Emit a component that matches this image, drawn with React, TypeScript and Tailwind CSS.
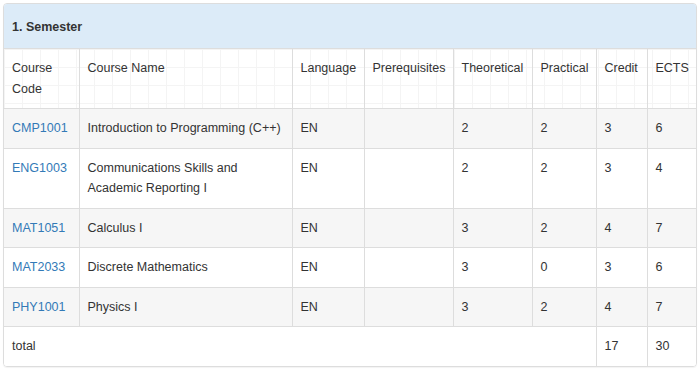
type Course = {
  code: string;
  name: string;
  lang: string;
  prereq: string;
  theory: number;
  practice: number;
  credit: number;
  ects: number;
};

const courses: Course[] = [
  { code: "CMP1001", name: "Introduction to Programming (C++)", lang: "EN", prereq: "", theory: 2, practice: 2, credit: 3, ects: 6 },
  { code: "ENG1003", name: "Communications Skills and Academic Reporting I", lang: "EN", prereq: "", theory: 2, practice: 2, credit: 3, ects: 4 },
  { code: "MAT1051", name: "Calculus I", lang: "EN", prereq: "", theory: 3, practice: 2, credit: 4, ects: 7 },
  { code: "MAT2033", name: "Discrete Mathematics", lang: "EN", prereq: "", theory: 3, practice: 0, credit: 3, ects: 6 },
  { code: "PHY1001", name: "Physics I", lang: "EN", prereq: "", theory: 3, practice: 2, credit: 4, ects: 7 },
];

const headers = ["Course Code", "Course Name", "Language", "Prerequisites", "Theoretical", "Practical", "Credit", "ECTS"];
const widths = ["w-[75px]", "w-[213px]", "w-[72px]", "w-[89px]", "w-[79px]", "w-[64px]", "w-[51px]", "w-[49px]"];

const cell = "border border-[#dddddd] px-[8px] py-[9px] align-top text-left font-normal first:border-l-0 last:border-r-0";

const App = () => {
  const totalCredit = courses.reduce((s, c) => s + c.credit, 0);
  const totalEcts = courses.reduce((s, c) => s + c.ects, 0);

  return (
    <div className="w-[700px] h-[369px] bg-white p-[3px] font-['Liberation_Sans',Arial,sans-serif] text-[12.5px] leading-[20.5px] text-[#333333]">
      <div className="border border-[#dddddd] rounded-[4px] overflow-hidden shadow-[0_1px_1px_rgba(0,0,0,0.05)]">
        {/* 학기 제목 */}
        <div className="bg-[#dcebf8] border-b border-[#dddddd] px-[8px] pt-[13px] pb-[10.5px] font-bold">
          1. Semester
        </div>

        <table className="w-full table-fixed border-collapse">
          <colgroup>
            {widths.map((w, i) => (
              <col key={i} className={w} />
            ))}
          </colgroup>
          <thead>
            <tr className="bg-white bg-[linear-gradient(to_right,#f4f4f4_1px,transparent_1px),linear-gradient(to_bottom,#f4f4f4_1px,transparent_1px)] bg-[size:18px_18px]">
              {headers.map((h) => (
                <th key={h} className={`${cell} border-t-0`}>
                  {h}
                </th>
              ))}
            </tr>
          </thead>
          <tbody>
            {courses.map((c, i) => (
              <tr key={c.code} className={i % 2 === 0 ? "bg-[#f6f6f6]" : "bg-white"}>
                <td className={cell}>
                  <a href="#" className="text-[#337ab7]">
                    {c.code}
                  </a>
                </td>
                <td className={cell}>{c.name}</td>
                <td className={cell}>{c.lang}</td>
                <td className={cell}>{c.prereq}</td>
                <td className={cell}>{c.theory}</td>
                <td className={cell}>{c.practice}</td>
                <td className={cell}>{c.credit}</td>
                <td className={cell}>{c.ects}</td>
              </tr>
            ))}
            <tr className="bg-white">
              <td colSpan={6} className={`${cell} border-b-0`}>
                total
              </td>
              <td className={`${cell} border-b-0`}>{totalCredit}</td>
              <td className={`${cell} border-b-0`}>{totalEcts}</td>
            </tr>
          </tbody>
        </table>
      </div>
    </div>
  );
};

export default App;
